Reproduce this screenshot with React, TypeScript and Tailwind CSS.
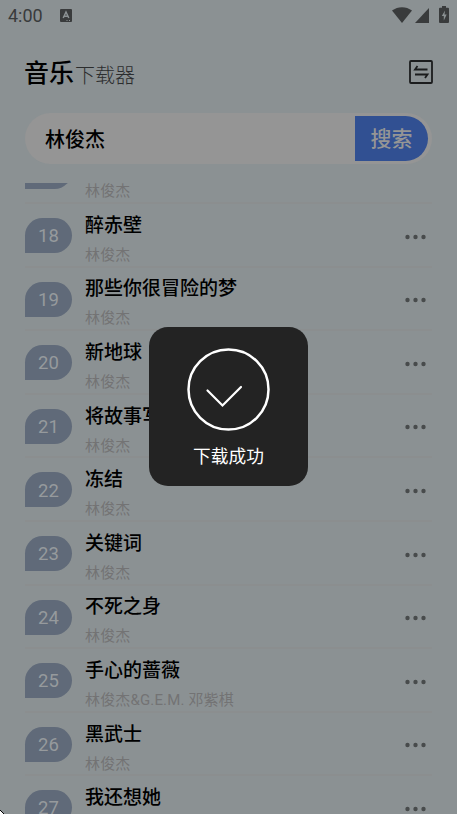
import React from "react";

type Song = {
  no: number;
  title: string;
  artist: string;
};

const songs: Song[] = [
  { no: 18, title: "醉赤壁", artist: "林俊杰" },
  { no: 19, title: "那些你很冒险的梦", artist: "林俊杰" },
  { no: 20, title: "新地球", artist: "林俊杰" },
  { no: 21, title: "将故事写成我们", artist: "林俊杰" },
  { no: 22, title: "冻结", artist: "林俊杰" },
  { no: 23, title: "关键词", artist: "林俊杰" },
  { no: 24, title: "不死之身", artist: "林俊杰" },
  { no: 25, title: "手心的蔷薇", artist: "林俊杰&G.E.M. 邓紫棋" },
  { no: 26, title: "黑武士", artist: "林俊杰" },
  { no: 27, title: "我还想她", artist: "林俊杰" },
];

const StatusBar = () => (
  <div className="flex h-8 shrink-0 items-center justify-between px-2 text-[#393b3c]">
    <div className="flex items-center">
      <span className="w-[52px] text-[18px] leading-8">4:00</span>
      <svg width="12" height="14" viewBox="0 0 12 14">
        <rect width="12" height="13" rx="1" fill="currentColor" />
        <path d="M3.2 9 6 3l2.8 6M4.2 7.3h3.6" fill="none" stroke="#8b9193" strokeWidth="1.5" />
        <path d="M6.5 11.5h1M9 11.5h1" stroke="#8b9193" />
      </svg>
    </div>
    <div className="flex items-center">
      <svg className="-mt-0.5" width="20" height="16" viewBox="0 0 20 16">
        <path d="M0 3.5C6-1 14-1 20 3.5L10 16Z" fill="currentColor" />
      </svg>
      <svg className="-mt-px ml-[3px] mr-px" width="14" height="15" viewBox="0 0 14 15">
        <path d="M14 0v15H0Z" fill="currentColor" />
      </svg>
      <svg className="-mt-[3px] ml-[9px]" width="10" height="17" viewBox="0 0 10 17">
        <path
          d="M3 0h4v1.7h2a1 1 0 0 1 1 1V16a1 1 0 0 1-1 1H1a1 1 0 0 1-1-1V2.7a1 1 0 0 1 1-1h2Z"
          fill="currentColor"
        />
        <path d="M6 4.5 2.8 10h2v4.5l2.9-6H5.5Z" fill="#8b9193" />
      </svg>
    </div>
  </div>
);

const Header = () => (
  <div className="flex h-[81px] shrink-0 items-center justify-between px-6">
    <h1 className="flex items-baseline pt-1">
      <span className="text-[25px] font-medium leading-9 text-black">音乐</span>
      <span className="relative top-px ml-px text-[20px] font-light leading-9 text-[#2b2d2e]">
        下载器
      </span>
    </h1>
    <svg className="-mt-0.5" width="24" height="24" viewBox="0 0 24 24" fill="none" stroke="#1b1c1d">
      <rect x="1" y="1" width="22" height="22" rx="1" strokeWidth="1.8" />
      <path d="M18.5 9.5H6L8.5 6M6 14.5h12.5L16 18" strokeWidth="1.8" />
    </svg>
  </div>
);

const SearchBar = () => (
  <div className="mx-[25px] flex h-[51px] shrink-0 items-center justify-between rounded-full bg-[#959595] pl-5 pr-1">
    <span className="pt-0.5 text-[20px] font-medium text-black">林俊杰</span>
    <button className="h-[45px] w-[73px] rounded-r-full bg-[#315092] pt-0.5 text-[21px] font-medium text-[#959595]">
      搜索
    </button>
  </div>
);

const SongRow = ({ song }: { song: Song }) => (
  <li className="flex h-[63.6px] shrink-0 border-t-2 border-[#8b8e8f]">
    <div className="mt-[14px] flex h-[35px] w-[47px] items-center justify-center rounded-[18px] rounded-bl-none bg-[#606a79] pt-[3px] text-[18.5px] text-[#969a9d]">
      {song.no}
    </div>
    <div className="ml-[13px] flex-1">
      <p className="mt-[7.8px] h-7 text-[19px] font-medium leading-7 text-black">{song.title}</p>
      <p className="mt-[5px] h-5 text-[15px] leading-5 tracking-[0.15px] text-[#737374]">
        {song.artist}
      </p>
    </div>
    <svg className="mr-[6px] mt-[29.6px]" width="21" height="6" viewBox="0 0 21 6" fill="#484b4c">
      <circle cx="2.5" cy="3" r="2.2" />
      <circle cx="10.5" cy="3" r="2.2" />
      <circle cx="18.5" cy="3" r="2.2" />
    </svg>
  </li>
);

const Toast = () => (
  <div className="absolute left-[149px] top-[327px] flex size-[159px] flex-col items-center rounded-[19px] bg-[#232323] pt-[21px] text-white">
    <svg className="mr-px" width="83" height="83" viewBox="0 0 83 83" fill="none" stroke="currentColor">
      <circle cx="41.5" cy="41.5" r="40" strokeWidth="2.5" />
      <path d="m20.5 42.5 15 15L54 39" strokeWidth="2.2" strokeLinecap="round" />
    </svg>
    <span className="mt-[13px] text-[17.7px] leading-[26px]">下载成功</span>
  </div>
);

const App: React.FC = () => {
  return (
    <div className="relative flex h-[814px] w-[457px] flex-col overflow-hidden bg-[#8b9193] font-[Roboto,'Noto_Sans_CJK_SC',sans-serif]">
      <StatusBar />
      <Header />
      <SearchBar />
      <div className="mt-[19px] flex-1 overflow-hidden px-[25px]">
        {/* tail of the row scrolled under the search bar */}
        <div className="flex h-[19px] items-start">
          <div className="h-1.5 w-[47px] overflow-hidden">
            <div className="-mt-[29px] h-[35px] rounded-[18px] rounded-bl-none bg-[#606a79]" />
          </div>
          <p className="-mt-[2px] ml-[13px] text-[15px] leading-5 tracking-[0.15px] text-[#737374]">
            林俊杰
          </p>
        </div>
        <ul className="flex flex-col">
          {songs.map((song) => (
            <SongRow key={song.no} song={song} />
          ))}
        </ul>
      </div>
      <Toast />
      <svg className="absolute bottom-0 left-0" width="4" height="5" viewBox="0 0 4 5">
        <path d="M0 1v4h4Z" fill="white" />
        <path d="m0 1 4 4" stroke="black" />
      </svg>
    </div>
  );
};

export default App;
